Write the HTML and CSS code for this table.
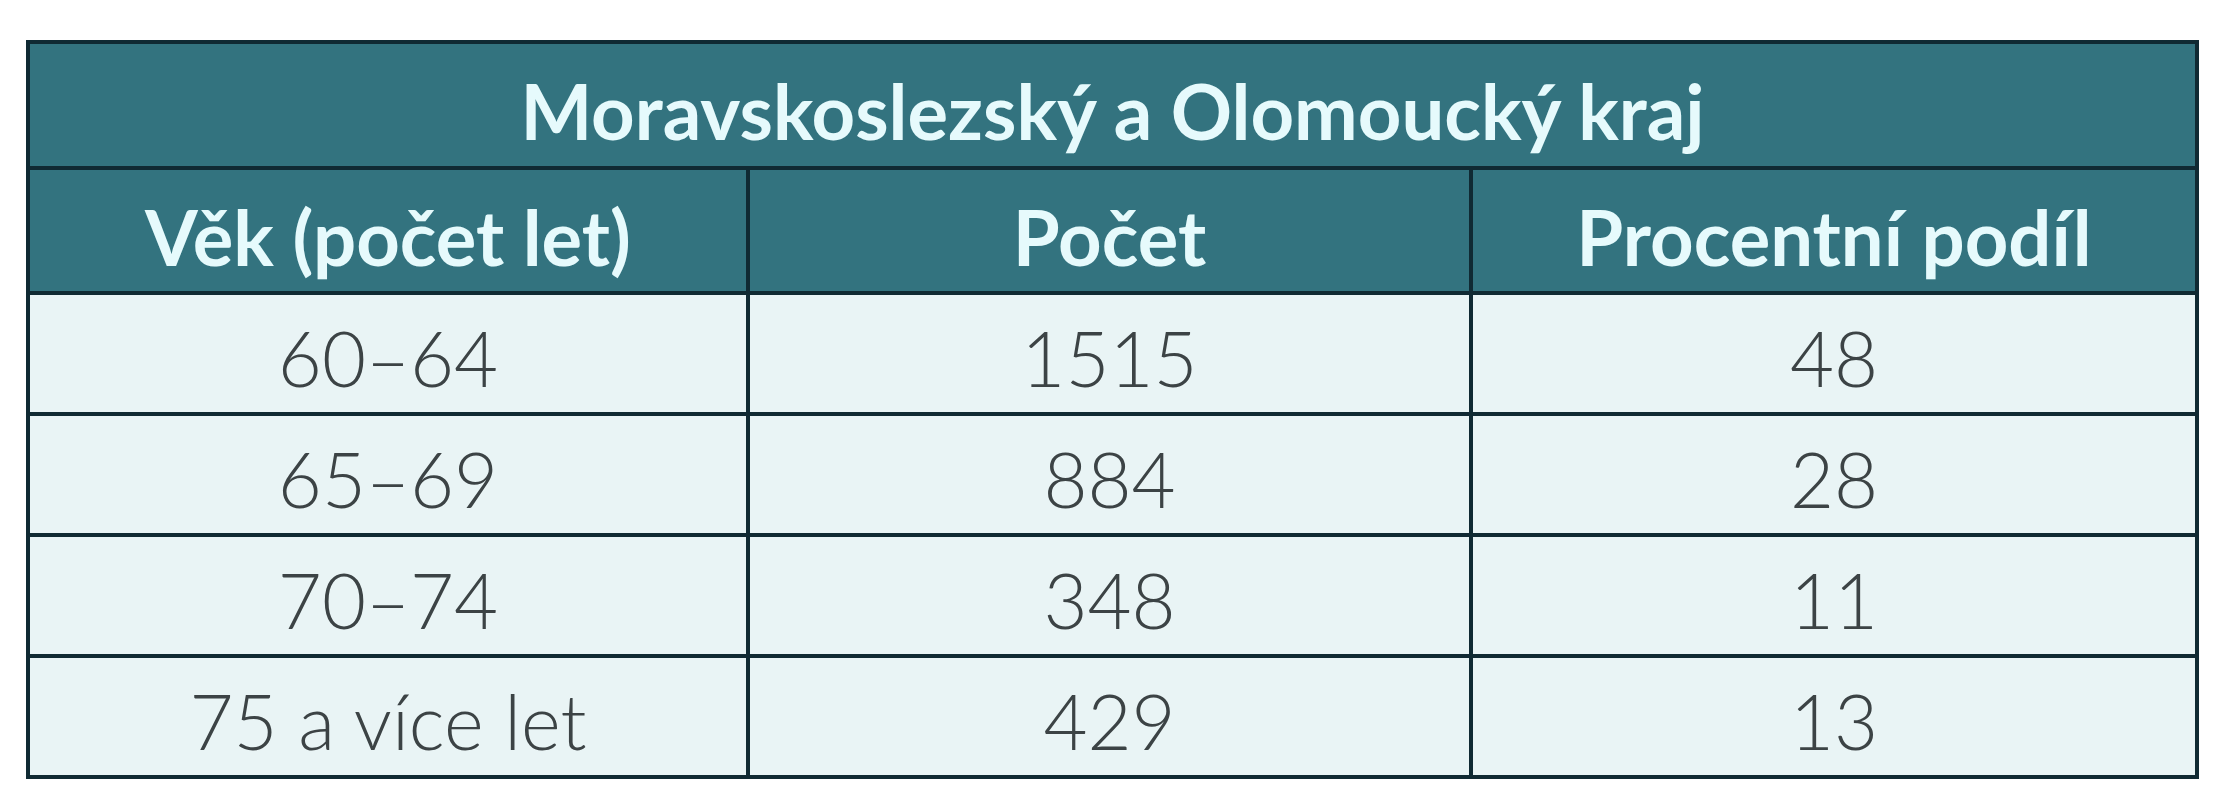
FILE: index.html
```html
<!DOCTYPE html>
<html lang="cs">
<head>
<meta charset="utf-8">
<title>Moravskoslezský a Olomoucký kraj</title>
<link rel="stylesheet" href="styles.css">
</head>
<body>
<table class="stats">
  <colgroup>
    <col class="col-age">
    <col class="col-count">
    <col class="col-share">
  </colgroup>
  <thead>
    <tr class="title-row"><th colspan="3">Moravskoslezský a Olomoucký kraj</th></tr>
    <tr class="head-row"><th>Věk (počet let)</th><th>Počet</th><th>Procentní podíl</th></tr>
  </thead>
  <tbody>
    <tr><td>60–64</td><td>1515</td><td>48</td></tr>
    <tr><td>65–69</td><td>884</td><td>28</td></tr>
    <tr><td>70–74</td><td>348</td><td>11</td></tr>
    <tr><td>75 a více let</td><td>429</td><td>13</td></tr>
  </tbody>
</table>
</body>
</html>
```
FILE: styles.css
```css
html, body {
  margin: 0;
  padding: 0;
  background: #ffffff;
}
body {
  padding: 40px 0 0 26px;
}
.stats {
  border-collapse: collapse;
  width: 2169px;
  table-layout: fixed;
  font-family: Lato, "Open Sans", sans-serif;
}
.col-age { width: 720px; }
.col-count { width: 723px; }
.col-share { width: 726px; }
.stats th,
.stats td {
  border: 4px solid #102a33;
  text-align: center;
  padding: 0;
}
.stats th {
  background: #33737f;
  color: #e6fafc;
  font-weight: 700;
  font-size: 76px;
  line-height: 1;
}
.title-row th {
  height: 126px;
  padding-top: 12px;
  box-sizing: border-box;
}
.head-row th {
  height: 125px;
  padding-top: 12px;
  box-sizing: border-box;
}
.stats td {
  background: #e9f4f5;
  color: #3c4345;
  font-weight: 300;
  font-size: 76px;
  line-height: 1;
  height: 121px;
  padding-top: 8px;
  box-sizing: border-box;
}
```
